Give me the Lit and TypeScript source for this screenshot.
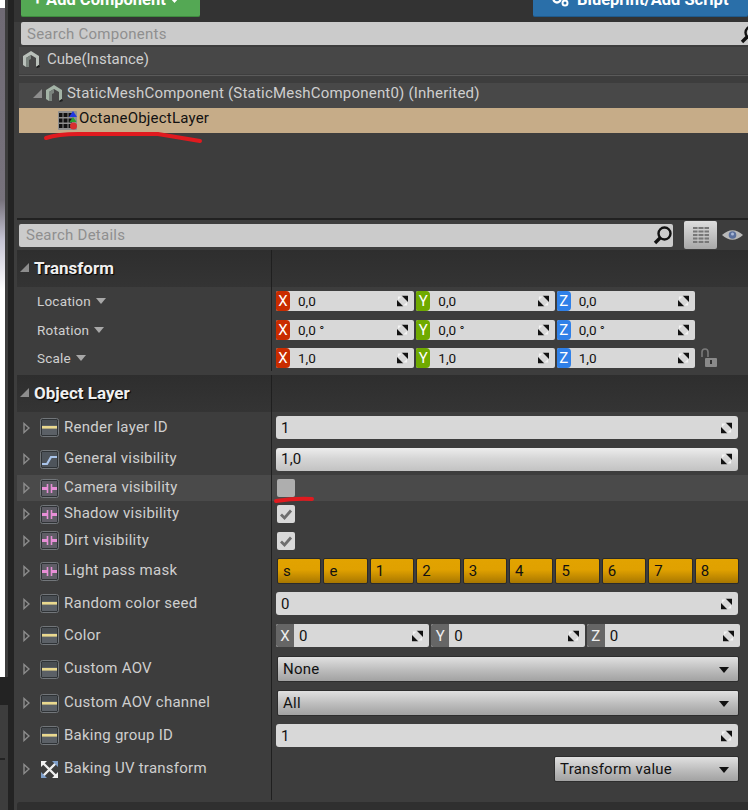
import { LitElement, html, css, svg } from 'lit';
import { customElement } from 'lit/decorators.js';

const spin = html`<svg class="spin" viewBox="0 0 12 12"><path d="M0 12V5l7 7z M12 0v7L5 0z" fill="#111"/><path d="M1 1h4L1 5z M11 11H7l4-4z" fill="#f4f4f4"/></svg>`;

const pinIcon = (kind: string) => {
  const inner: Record<string, unknown> = {
    num: svg`<rect x="2" y="2" width="15" height="15" fill="#5b6066"/><rect x="2" y="2" width="15" height="5" fill="#484d52"/><rect x="2" y="8" width="15" height="2.600" fill="#ead98f"/>`,
    curve: svg`<rect x="2" y="2" width="15" height="15" fill="#4e545b"/><path d="M2 14h5l4-7h6" fill="none" stroke="#a9c4ea" stroke-width="2.200"/>`,
    mask: svg`<rect x="2" y="2" width="15" height="15" fill="#5f5d66"/><path d="M2 8h5v3H2zM12 8h5v3h-5z" fill="#e88fd8"/><path d="M7.500 5v9M11.500 5v9" stroke="#e88fd8" stroke-width="1.600"/>`,
  };
  return html`<svg class="pin" viewBox="0 0 19 19"><rect x=".5" y=".5" width="18" height="18" rx="2" fill="#2f3336" stroke="#72767a"/>${inner[kind]}</svg>`;
};

const transformIcon = html`<svg class="pin" viewBox="0 0 19 19"><path d="M3 3l13 13M16 3L3 16" stroke="#eee" stroke-width="2.400"/><path d="M1 7V1h6zM18 12v6h-6z" fill="#f2f2f2"/><path d="M12 1h6v6zM1 12v6h6z" fill="#7f9fc9"/></svg>`;

const expander = html`<svg class="exp" viewBox="0 0 7 12"><path d="M1 1.500l5 4.500-5 4.500z" fill="none" stroke="#8d8d8d" stroke-width="1.400"/></svg>`;
const collapse = html`<svg class="collapse" viewBox="0 0 9 9"><path d="M9 0v9H0z" fill="#8d8d8d"/></svg>`;
const caret = html`<svg class="caret" viewBox="0 0 10 6"><path d="M0 0h10L5 6z" fill="#a8a8a8"/></svg>`;
const blackCaret = html`<svg class="combo-caret" viewBox="0 0 10 6"><path d="M0 0h10L5 6z" fill="#111"/></svg>`;
const check = html`<svg viewBox="0 0 14 14" width="14" height="14"><path d="M2 7.500l3.500 3.500L12 3.500" fill="none" stroke="#6e6e6e" stroke-width="2.800"/></svg>`;
const magnifier = html`<svg viewBox="0 0 20 20" width="20" height="20"><circle cx="11.500" cy="8.500" r="6" fill="none" stroke="#111" stroke-width="2.400"/><path d="M7 13l-5 5" stroke="#111" stroke-width="3.400"/></svg>`;
const cube = (tint: string) => html`<svg class="cube" viewBox="0 0 18 18"><path d="M1 6l8-5 8 5v9l-3 2V8L9 5 4 8v9l-3-2z" fill="${tint}"/><path d="M4 8l5-3v4L7 10v7H4z" fill="#7b847e"/><path d="M14 17l3-2 1 2-3 1z" fill="#1e1e1e"/></svg>`;

type Row = { label: string; icon: string; h: number; hover?: boolean; value: unknown };

@customElement('app-root')
export class AppRoot extends LitElement {
  static styles = css`
    :host { display: block; width: 748px; height: 810px; overflow: hidden; position: relative; background: #3d3d3d; font-family: Roboto, 'Liberation Sans', sans-serif; font-size: 15px; color: #cfcfcf; }
    .shell { display: flex; height: 810px; }
    .rail { width: 8px; flex: none; display: flex; flex-direction: column; }
    .rail-top { height: 677px; display: flex; }
    .viewport { width: 5px; background: linear-gradient(#fff 8px, #6f6a74 8px, #77727c 200px, #c6c4d4 240px, #fff 290px); }
    .rail-side { width: 3px; background: #3d3d3d; }
    .rail-mid { height: 28px; background: #232323; }
    .rail-bottom { flex: 1; background: #3d3d3d; padding-top: 53px; }
    .tick { width: 5px; height: 2px; background: #232323; }
    .gutter { width: 6px; background: #232323; flex: none; }
    .main { flex: 1; min-width: 0; display: flex; flex-direction: column; }

    .toolbar { height: 22px; display: flex; justify-content: space-between; padding-left: 7px; flex: none; background: #333; }
    .btn { height: 17px; border-radius: 0 0 2px 2px; color: #fff; font-weight: 700; font-size: 16.5px; display: flex; align-items: flex-end; overflow: hidden; box-sizing: border-box; white-space: nowrap; }
    .btn span { display: block; line-height: 20px; margin-bottom: 6px; flex: none; }
    .add { width: 179px; background: #54a854; padding-left: 12px; border-bottom: 1px solid #3e8a3e; gap: 4px; }
    .add svg { margin-bottom: 13px; flex: none; }
    .bp { width: 215px; background: #2a6fa9; padding-left: 18px; border-bottom: 1px solid #1f5a8c; gap: 8px; }
    .bp svg { flex: none; margin-bottom: 9px; }
    .search { background: #cbcbcb; color: #8f8f8f; font-size: 15px; letter-spacing: .25px; display: flex; align-items: center; justify-content: space-between; box-sizing: border-box; border-radius: 2px; }
    .search.top { height: 23px; margin-left: 7px; padding-left: 6px; flex: none; overflow: hidden; border-radius: 2px 0 0 2px; }
    .search.top svg { margin-right: -12px; flex: none; }
    .instance { height: 27px; margin: 2px 0 0 5px; padding: 0 0 3px 3px; box-sizing: border-box; background: #474747; display: flex; align-items: center; gap: 7px; flex: none; }
    .cube { width: 18px; height: 18px; flex: none; }
    .sep { height: 3px; margin-left: 5px; background: linear-gradient(#303030, #5a5a5a 50%, #303030); flex: none; }
    .tree { margin: 6px 0 0 5px; flex: none; }
    .tree-row { height: 25px; box-sizing: border-box; background: #484848; display: flex; align-items: center; padding: 0 0 5px 14px; letter-spacing: .2px; }
    .tree-row .collapse { margin-right: 3px; }
    .tree-row .cube { margin-right: 4px; }
    .tree-row.sel { background: #c6ac88; color: #111; padding-left: 39px; gap: 2px; }
    .layer-icon { width: 19px; height: 19px; margin-top: 4px; }
    .spacer { height: 85px; flex: none; }
    .divider { height: 2px; margin-left: 3px; background: #212121; flex: none; }
    .detail-bar { height: 30px; display: flex; align-items: center; flex: none; }
    .detail-bar .search { width: 654px; height: 23px; margin-left: 5px; padding: 0 0 0 7px; }
    .view-btn { width: 33px; height: 28px; margin-left: 11px; background: linear-gradient(#dedede, #a8a8a8); border-radius: 2px; display: flex; align-items: center; justify-content: center; }
    .eye { margin-left: 5px; }

    .section { height: 37px; margin-left: 3px; background: linear-gradient(#2e2e2e, #343434); display: flex; flex: none; color: #f0f0f0; font-weight: 700; font-size: 17px; text-shadow: 1px 1px 1px #000; }
    .section .name { width: 255px; padding: 0 0 2px 3px; display: flex; gap: 5px; align-items: center; box-sizing: border-box; border-right: 1px solid #1f1f1f; }
    .collapse { width: 9px; height: 9px; flex: none; }

    .row { display: grid; grid-template-columns: 255px 1fr; margin-left: 3px; flex: none; }
    .row.hover { background: #4a4a4a; }
    .label { border-right: 1px solid #1f1f1f; display: flex; align-items: center; padding-left: 6px; box-sizing: border-box; letter-spacing: .25px; white-space: nowrap; }
    .label-text { margin-top: -2px; }
    .exp { width: 7px; height: 12px; flex: none; margin-right: 10px; }
    .pin { width: 19px; height: 19px; flex: none; margin-right: 5px; }
    .value { display: flex; align-items: center; padding-left: 4px; min-width: 0; }

    .xf .label { padding: 0 0 1px 20px; font-size: 13.5px; gap: 5px; letter-spacing: .2px; }
    .caret { width: 10px; height: 6px; }
    .vec { display: flex; gap: 2px; width: 419px; flex: none; }
    .cell { flex: 1; min-width: 0; height: 20px; background: #d8d8d8; border-radius: 2px; display: flex; align-items: center; color: #111; font-size: 13.5px; overflow: hidden; position: relative; }
    .axis { width: 14px; height: 100%; color: #fff; font-size: 15px; display: flex; align-items: center; justify-content: center; margin-right: 8px; flex: none; border-radius: 0 4px 4px 0; }
    .x { background: #c92c00; } .y { background: #6faa00; } .z { background: #2f80e8; }
    .lock { margin-left: 5px; flex: none; }
    .spin { position: absolute; right: 6px; top: 50%; transform: translateY(-50%); width: 11px; height: 11px; }
    .xf-end { height: 4px; margin-left: 3px; width: 255px; box-sizing: border-box; flex: none; }

    .field { position: relative; height: 23px; width: 462px; flex: none; background: #d8d8d8; border-radius: 3px; color: #111; display: flex; align-items: center; padding-left: 5px; box-sizing: border-box; letter-spacing: .2px; }
    .field.glossy { background: linear-gradient(#ededed, #d6d6d6 45%, #c2c2c2); }
    .box { width: 18px; height: 18px; background: #d9d9d9; border-radius: 2px; margin-left: 1px; display: flex; align-items: center; justify-content: center; }
    .box.off { background: #aeaeae; }
    .mask { display: flex; gap: 2px; margin-left: 1px; width: 462px; flex: none; }
    .mask div { flex: 1; height: 26px; box-sizing: border-box; padding-left: 5px; background: linear-gradient(#e2a300 0%, #e0a100 45%, #a87700 100%); border: 1px solid #2b2b2b; border-radius: 2px; color: #111; display: flex; align-items: center; }
    .pvec { display: flex; gap: 2px; width: 464px; flex: none; }
    .pvec .cell { height: 23px; font-size: 15px; }
    .pvec .axis { background: #666; width: 18px; border-radius: 2px 0 0 2px; margin-right: 5px; color: #eee; }
    .combo { position: relative; height: 26px; margin-left: 1px; width: 462px; flex: none; box-sizing: border-box; padding-left: 5px; background: linear-gradient(#e0e0e0, #b9b9b9 60%, #a2a2a2); border: 1px solid #2d2d2d; border-radius: 2px; color: #111; display: flex; align-items: center; letter-spacing: .25px; }
    .combo.small { width: 185px; margin-left: 278px; }
    .combo-caret { position: absolute; right: 9px; top: 10px; width: 10px; height: 6px; }

    .filler { height: 13px; margin-left: 3px; width: 255px; box-sizing: border-box; border-right: 1px solid #1f1f1f; flex: none; }
    .footer { height: 8px; margin: 2px 0 0 3px; background: #2f2f2f; border-radius: 3px 0 0 0; flex: none; }
    .scribble { position: absolute; left: 0; top: 0; width: 748px; height: 810px; pointer-events: none; }
  `;

  private vec(vals: string[], lock = false) {
    return html`<div class="vec">
      ${['x', 'y', 'z'].map((a, i) => html`<div class="cell"><span class="axis ${a}">${a.toUpperCase()}</span>${vals[i]}${spin}</div>`)}
    </div>${lock ? html`<svg class="lock" width="18" height="20" viewBox="0 0 18 20"><path d="M2 9V4a3 3 0 0 1 6 0v5" fill="none" stroke="#7a7a7a" stroke-width="1.600"/><rect x="5" y="10" width="12" height="9" rx="1" fill="#8a8a8a"/><rect x="10" y="12" width="2" height="4" fill="#333"/></svg>` : ''}`;
  }

  private field(v: string, glossy = false) {
    return html`<div class="field ${glossy ? 'glossy' : ''}">${v}${spin}</div>`;
  }

  private combo(v: string, small = false) {
    return html`<div class="combo ${small ? 'small' : ''}">${v}${blackCaret}</div>`;
  }

  render() {
    const rows: Row[] = [
      { label: 'Render layer ID', icon: 'num', h: 31, value: this.field('1') },
      { label: 'General visibility', icon: 'curve', h: 32, value: this.field('1,0', true) },
      { label: 'Camera visibility', icon: 'mask', h: 26, hover: true, value: html`<div class="box off"></div>` },
      { label: 'Shadow visibility', icon: 'mask', h: 26, value: html`<div class="box">${check}</div>` },
      { label: 'Dirt visibility', icon: 'mask', h: 27, value: html`<div class="box">${check}</div>` },
      { label: 'Light pass mask', icon: 'mask', h: 34, value: html`<div class="mask">${['s', 'e', '1', '2', '3', '4', '5', '6', '7', '8'].map((m) => html`<div>${m}</div>`)}</div>` },
      { label: 'Random color seed', icon: 'num', h: 31, value: this.field('0') },
      { label: 'Color', icon: 'num', h: 33, value: html`<div class="pvec">${['X', 'Y', 'Z'].map((a) => html`<div class="cell"><span class="axis">${a}</span>0${spin}</div>`)}</div>` },
      { label: 'Custom AOV', icon: 'num', h: 34, value: this.combo('None') },
      { label: 'Custom AOV channel', icon: 'num', h: 34, value: this.combo('All') },
      { label: 'Baking group ID', icon: 'num', h: 31, value: this.field('1') },
      { label: 'Baking UV transform', icon: 'uv', h: 36, value: this.combo('Transform value', true) },
    ];
    const xf: [string, string[], number][] = [
      ['Location', ['0,0', '0,0', '0,0'], 28],
      ['Rotation', ['0,0 °', '0,0 °', '0,0 °'], 30],
      ['Scale', ['1,0', '1,0', '1,0'], 26],
    ];

    return html`
      <div class="shell">
        <div class="rail">
          <div class="rail-top"><div class="viewport"></div><div class="rail-side"></div></div>
          <div class="rail-mid"></div>
          <div class="rail-bottom"><div class="tick"></div></div>
        </div>
        <div class="gutter"></div>
        <div class="main">
          <div class="toolbar">
            <div class="btn add"><span>+ Add Component</span><svg width="9" height="5" viewBox="0 0 9 5"><path d="M0 0h9L4.500 5z" fill="#fff"/></svg></div>
            <div class="btn bp">
              <svg width="18" height="12" viewBox="0 0 18 12"><circle cx="6" cy="4" r="3.500" fill="none" stroke="#fff" stroke-width="2.400"/><circle cx="14" cy="8" r="2.500" fill="none" stroke="#fff" stroke-width="2"/></svg>
              <span>Blueprint/Add Script</span>
            </div>
          </div>
          <div class="search top">Search Components ${magnifier}</div>
          <div class="instance">${cube('#b9c0ba')}Cube(Instance)</div>
          <div class="sep"></div>
          <div class="tree">
            <div class="tree-row">${collapse}${cube('#a3b3a6')}StaticMeshComponent (StaticMeshComponent0) (Inherited)</div>
            <div class="tree-row sel">
              <svg class="layer-icon" viewBox="0 0 19 19"><rect width="19" height="19" rx="1" fill="#8f8f8f"/><path d="M1 2h13v4H1zM1 7.500h13v4H1zM1 13h13v4H1z" fill="#111"/><path d="M5 2v15M10 2v15" stroke="#8f8f8f"/><path d="M15 0l4 6h-8z" fill="#2438e0"/><path d="M15 6l3.500 5h-7z" fill="#2aa030"/><circle cx="15.500" cy="15" r="3.500" fill="#d83030"/></svg>
              OctaneObjectLayer
            </div>
          </div>
          <div class="spacer"></div>
          <div class="divider"></div>
          <div class="detail-bar">
            <div class="search">Search Details ${magnifier}</div>
            <div class="view-btn"><svg width="18" height="18" viewBox="0 0 18 18"><path d="M1 2h16M1 5.500h16M1 9h16M1 12.500h16M1 16h16" stroke="#777" stroke-width="2"/><path d="M6 1v16M12 1v16" stroke="#c9c9c9" stroke-width="1"/></svg></div>
            <svg class="eye" width="21" height="14" viewBox="0 0 22 14"><path d="M0 7q11-10 22 0q-11 10-22 0z" fill="#b9b9b9"/><circle cx="11" cy="7" r="4" fill="#5a6f9c"/><circle cx="11" cy="6" r="1.600" fill="#a8b8d8"/></svg>
          </div>

          <div class="section"><div class="name">${collapse}Transform</div></div>
          ${xf.map(
            ([l, v, h], i) => html`<div class="row xf" style="height:${h}px"><div class="label">${l}${caret}</div><div class="value">${this.vec(v, i === 2)}</div></div>`
          )}
          <div class="xf-end"></div>

          <div class="section"><div class="name">${collapse}Object Layer</div></div>
          ${rows.map(
            (r) => html`<div class="row ${r.hover ? 'hover' : ''}" style="height:${r.h}px">
              <div class="label">${expander}${r.icon === 'uv' ? transformIcon : pinIcon(r.icon)}<span class="label-text">${r.label}</span></div>
              <div class="value">${r.value}</div>
            </div>`
          )}
          <div class="filler"></div>
          <div class="footer"></div>
        </div>
      </div>
      <svg class="scribble" viewBox="0 0 748 810">
        <path d="M46 138q12-4 32-4t50 0 30 0 42 7" fill="none" stroke="#e01a1f" stroke-width="4" stroke-linecap="round"/>
        <path d="M276 501q20-3 36-2" fill="none" stroke="#e01a1f" stroke-width="4" stroke-linecap="round"/>
      </svg>
    `;
  }
}
